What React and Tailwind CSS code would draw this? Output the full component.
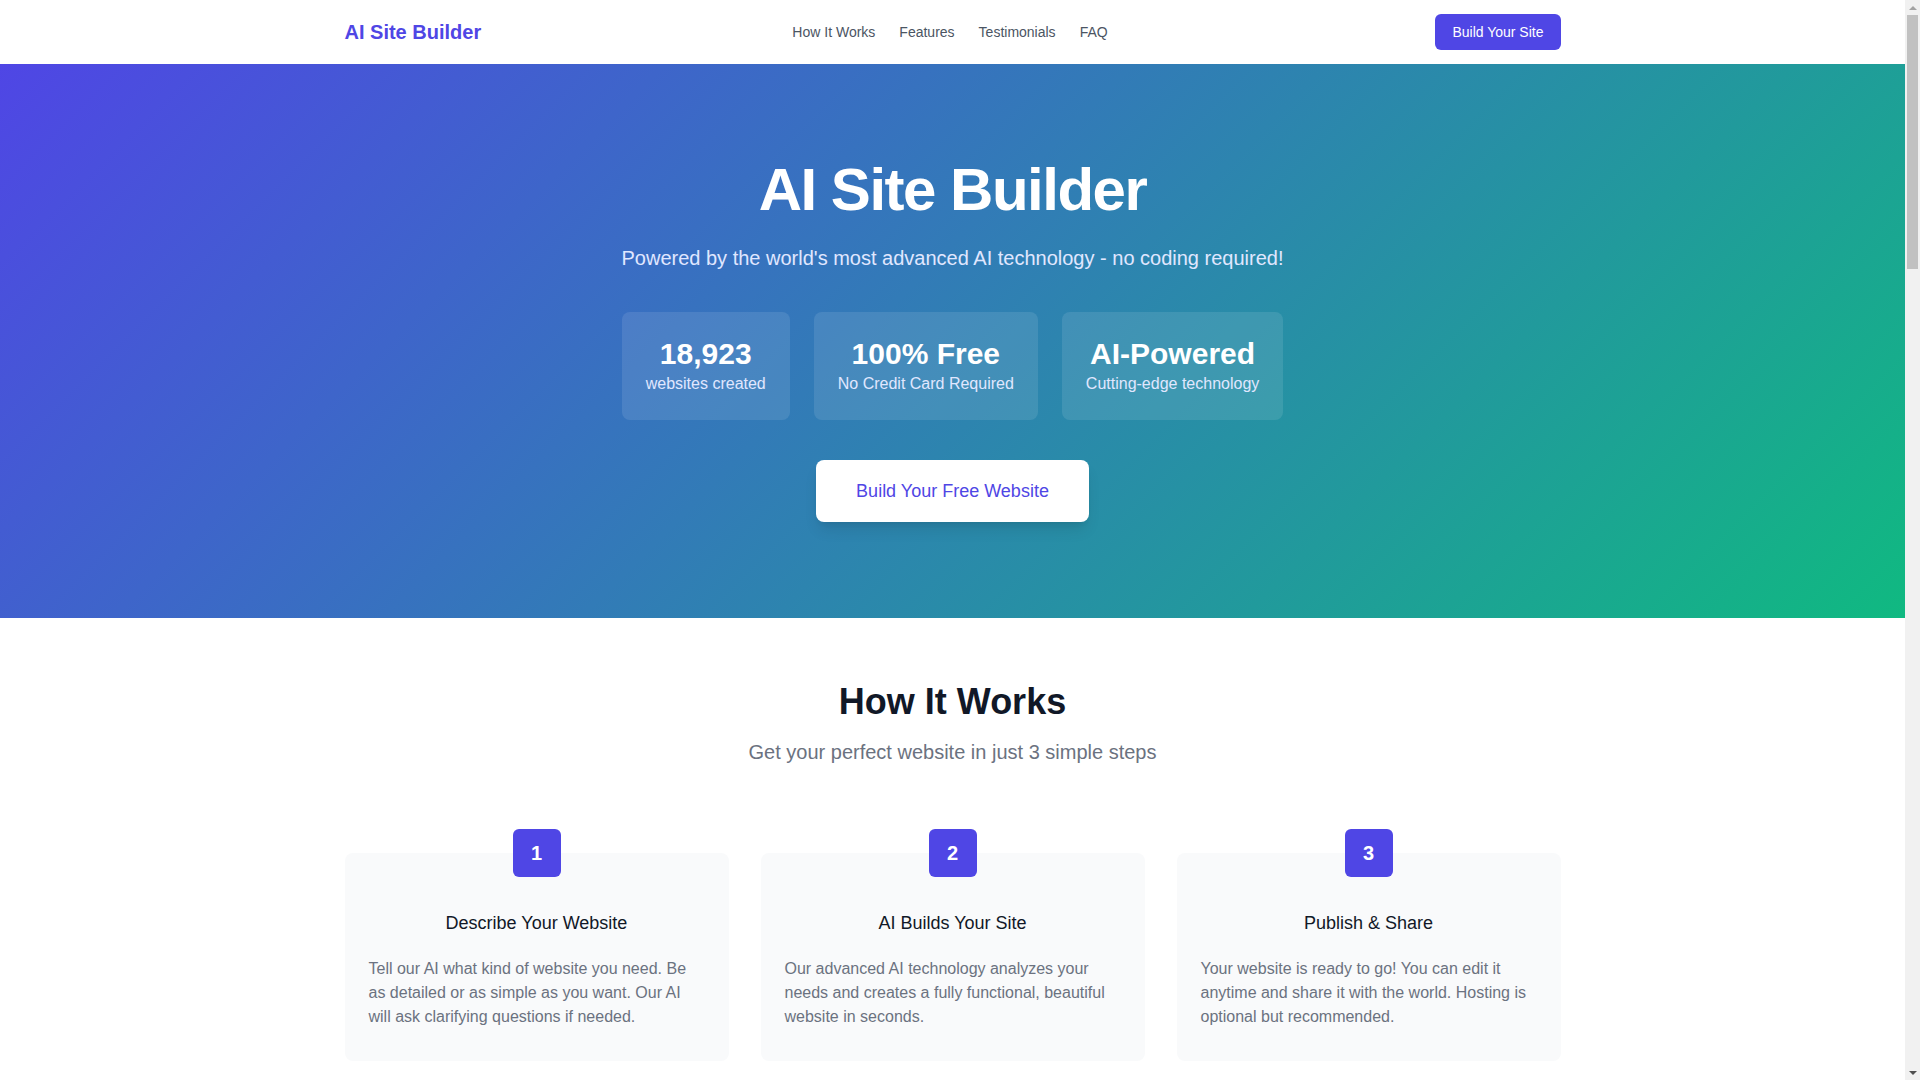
import React from 'react';

const stats = [
  { value: '18,923', label: 'websites created' },
  { value: '100% Free', label: 'No Credit Card Required' },
  { value: 'AI-Powered', label: 'Cutting-edge technology' },
];

const steps = [
  {
    n: 1,
    title: 'Describe Your Website',
    text: 'Tell our AI what kind of website you need. Be as detailed or as simple as you want. Our AI will ask clarifying questions if needed.',
  },
  {
    n: 2,
    title: 'AI Builds Your Site',
    text: 'Our advanced AI technology analyzes your needs and creates a fully functional, beautiful website in seconds.',
  },
  {
    n: 3,
    title: 'Publish & Share',
    text: 'Your website is ready to go! You can edit it anytime and share it with the world. Hosting is optional but recommended.',
  },
];

const features = [
  { title: 'Responsive Design', text: 'Every site looks great on phones, tablets and desktops without any extra work.' },
  { title: 'SEO Optimized', text: 'Built-in best practices help your website get found on search engines.' },
  { title: 'Lightning Fast', text: 'Optimized code and assets keep your pages loading in the blink of an eye.' },
  { title: 'Easy Editing', text: 'Change text, images and colors with a simple visual editor.' },
  { title: 'Custom Domains', text: 'Connect your own domain name or use a free subdomain.' },
  { title: 'Secure Hosting', text: 'Free SSL certificates and reliable hosting included.' },
];

const testimonials = [
  { name: 'Sarah M.', role: 'Small Business Owner', text: 'I had a professional website for my bakery in less than five minutes. Incredible!' },
  { name: 'James K.', role: 'Freelance Designer', text: 'The AI understood exactly what I wanted. It saved me days of work.' },
  { name: 'Priya S.', role: 'Photographer', text: 'My portfolio looks stunning and I did not write a single line of code.' },
];

const faqs = [
  { q: 'Is it really free?', a: 'Yes. You can build and preview your website completely free, no credit card required.' },
  { q: 'Do I need any coding skills?', a: 'Not at all. Just describe what you want and our AI does the rest.' },
  { q: 'Can I edit my website later?', a: 'Absolutely. You can edit your content, layout and styles at any time.' },
  { q: 'Can I use my own domain?', a: 'Yes, you can connect a custom domain to any website you create.' },
  { q: 'How long does it take?', a: 'Most websites are generated in under a minute.' },
  { q: 'Is hosting included?', a: 'Hosting is optional, but we recommend it for the best performance and security.' },
];

// classic browser scrollbar look on the right edge
const Scrollbar = () => (
  <aside className="w-[15px] shrink-0 h-full bg-[#f1f1f1] flex flex-col items-center">
    <div className="h-[15px] w-full flex items-center justify-center">
      <div className="w-0 h-0 border-x-[4px] border-x-transparent border-b-[4px] border-b-[#a3a3a3]" />
    </div>
    <div className="w-[11px] h-[254px] bg-[#c1c1c1]" />
    <div className="flex-1" />
    <div className="h-[15px] w-full flex items-center justify-center">
      <div className="w-0 h-0 border-x-[4px] border-x-transparent border-t-[4px] border-t-[#505050]" />
    </div>
  </aside>
);

export default function App() {
  return (
    <div className="flex h-screen overflow-hidden bg-white text-gray-900 font-['Liberation_Sans',Arial,sans-serif]">
      <main className="flex-1 min-w-0 h-full overflow-y-auto [scrollbar-width:none]">
        {/* nav */}
        <header className="bg-white shadow-sm">
          <div className="max-w-7xl mx-auto px-8 h-16 flex items-center">
            <div className="flex-1">
              <a className="text-xl font-bold text-[#4f46e5]">AI Site Builder</a>
            </div>
            <nav className="flex items-center gap-6 text-sm text-[#4b5563] -ml-[5px]">
              <a>How It Works</a>
              <a>Features</a>
              <a>Testimonials</a>
              <a>FAQ</a>
            </nav>
            <div className="flex-1 flex justify-end">
              <button className="px-[17px] py-2 rounded-md bg-[#4f46e5] text-white text-sm">Build Your Site</button>
            </div>
          </div>
        </header>

        {/* hero */}
        <section className="bg-[linear-gradient(135deg,#4f46e5,#10b981)] py-24 text-center text-white">
          <h1 className="text-6xl leading-none font-bold tracking-tight mb-6">AI Site Builder</h1>
          <p className="text-xl text-[#e0e7ff] mb-10">
            Powered by the world's most advanced AI technology - no coding required!
          </p>
          <div className="flex justify-center gap-6 mb-10">
            {stats.map((s) => (
              <div key={s.value} className="bg-white/10 rounded-lg p-6">
                <div className="text-3xl font-bold">{s.value}</div>
                <div className="text-base text-[#e0e7ff]">{s.label}</div>
              </div>
            ))}
          </div>
          <button className="bg-white text-[#4f46e5] text-lg px-10 py-[17px] rounded-lg shadow-lg">
            Build Your Free Website
          </button>
        </section>

        {/* how it works */}
        <section className="py-16">
          <div className="max-w-7xl mx-auto px-8">
            <div className="text-center mb-[87px]">
              <h2 className="text-4xl font-bold text-[#111827] mb-4">How It Works</h2>
              <p className="text-xl text-[#6b7280]">Get your perfect website in just 3 simple steps</p>
            </div>
            <div className="grid grid-cols-3 gap-8">
              {steps.map((s) => (
                <div key={s.n} className="relative bg-[#f9fafb] rounded-lg px-6 pt-14 pb-8 text-center">
                  <div className="absolute -top-6 left-1/2 -translate-x-1/2 w-12 h-12 rounded-md bg-[#4f46e5] text-white text-xl font-bold flex items-center justify-center">
                    {s.n}
                  </div>
                  <h3 className="text-lg text-[#111827] mb-5">{s.title}</h3>
                  <p className="text-base text-[#6b7280] text-left">{s.text}</p>
                </div>
              ))}
            </div>
          </div>
        </section>

        {/* features */}
        <section className="py-24 bg-[#f9fafb]">
          <div className="max-w-7xl mx-auto px-8">
            <div className="text-center mb-16">
              <h2 className="text-4xl font-bold text-[#111827] mb-4">Features</h2>
              <p className="text-xl text-[#6b7280]">Everything you need for a great website</p>
            </div>
            <div className="grid grid-cols-3 gap-8">
              {features.map((f) => (
                <div key={f.title} className="bg-white rounded-lg p-8 shadow-sm h-64">
                  <div className="w-12 h-12 rounded-md bg-[#eef2ff] mb-6" />
                  <h3 className="text-lg font-semibold text-[#111827] mb-3">{f.title}</h3>
                  <p className="text-[#6b7280]">{f.text}</p>
                </div>
              ))}
            </div>
          </div>
        </section>

        {/* testimonials */}
        <section className="py-24">
          <div className="max-w-7xl mx-auto px-8">
            <div className="text-center mb-16">
              <h2 className="text-4xl font-bold text-[#111827] mb-4">Testimonials</h2>
              <p className="text-xl text-[#6b7280]">What our users are saying</p>
            </div>
            <div className="grid grid-cols-3 gap-8">
              {testimonials.map((t) => (
                <div key={t.name} className="bg-[#f9fafb] rounded-lg p-8 h-72">
                  <p className="text-[#4b5563] italic mb-8">"{t.text}"</p>
                  <div className="font-semibold text-[#111827]">{t.name}</div>
                  <div className="text-sm text-[#6b7280]">{t.role}</div>
                </div>
              ))}
            </div>
          </div>
        </section>

        {/* faq */}
        <section className="py-24 bg-[#f9fafb]">
          <div className="max-w-3xl mx-auto px-8">
            <div className="text-center mb-16">
              <h2 className="text-4xl font-bold text-[#111827] mb-4">Frequently Asked Questions</h2>
            </div>
            <div className="flex flex-col gap-8">
              {faqs.map((f) => (
                <div key={f.q} className="bg-white rounded-lg p-6 shadow-sm">
                  <h3 className="text-lg font-semibold text-[#111827] mb-2">{f.q}</h3>
                  <p className="text-[#6b7280]">{f.a}</p>
                </div>
              ))}
            </div>
          </div>
        </section>

        {/* cta */}
        <section className="bg-[linear-gradient(135deg,#4f46e5,#10b981)] py-28 text-center text-white">
          <h2 className="text-4xl font-bold mb-6">Ready to build your website?</h2>
          <p className="text-xl text-[#e0e7ff] mb-10">Join thousands of happy users today.</p>
          <button className="bg-white text-[#4f46e5] text-lg px-10 py-4 rounded-lg shadow-lg">
            Build Your Free Website
          </button>
        </section>

        {/* footer */}
        <footer className="bg-[#111827] text-[#9ca3af] py-20">
          <div className="max-w-7xl mx-auto px-8 flex justify-between">
            <div>
              <div className="text-xl font-bold text-white mb-3">AI Site Builder</div>
              <p className="text-sm">Build beautiful websites with AI.</p>
            </div>
            <div className="flex gap-6 text-sm">
              <a>How It Works</a>
              <a>Features</a>
              <a>Testimonials</a>
              <a>FAQ</a>
            </div>
          </div>
          <div className="max-w-7xl mx-auto px-8 mt-12 text-sm">© 2024 AI Site Builder. All rights reserved.</div>
        </footer>
      </main>
      <Scrollbar />
    </div>
  );
}
